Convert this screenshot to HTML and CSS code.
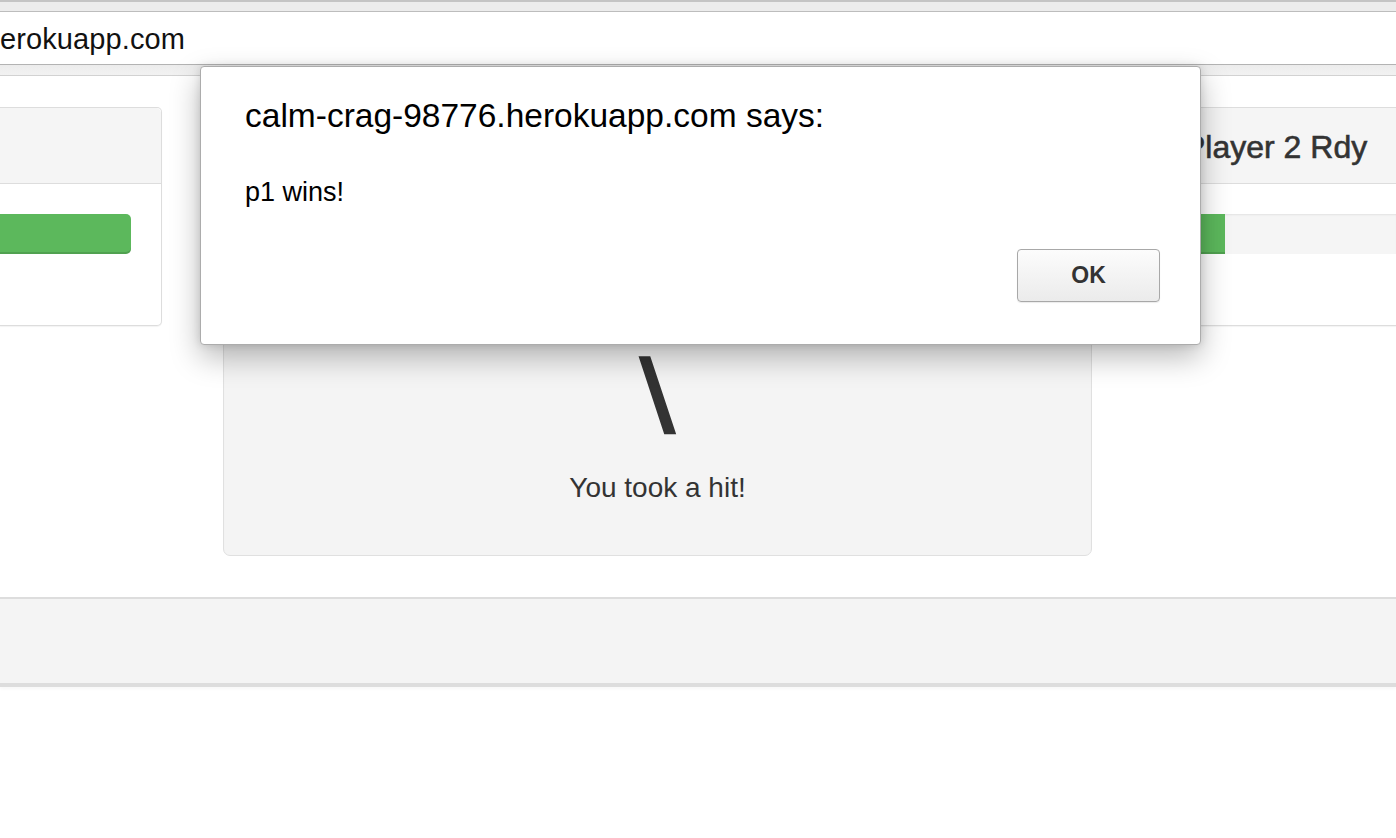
FILE: index.html
```html
<!DOCTYPE html>
<html>
<head>
<meta charset="utf-8">
<title>calm-crag-98776</title>
<link rel="stylesheet" href="styles.css">
</head>
<body>
<header class="chrome">
  <div class="tabstrip"></div>
  <div class="address">erokuapp.com</div>
  <div class="toolbar"></div>
</header>

<main class="arena">
  <section class="panel panel-left">
    <div class="panel-heading"></div>
    <div class="panel-body">
      <div class="hp-bar full"></div>
    </div>
  </section>

  <section class="well">
    <div class="attack">\</div>
    <p class="status">You took a hit!</p>
  </section>

  <section class="panel panel-right">
    <div class="panel-heading"><h3 class="player">Player 2 Rdy</h3></div>
    <div class="panel-body">
      <div class="progress"><div class="progress-fill" style="width: 39px"></div></div>
    </div>
  </section>
</main>

<footer class="footer-band"></footer>

<div class="dialog" role="alertdialog">
  <h2 class="dialog-title">calm-crag-98776.herokuapp.com says:</h2>
  <p class="dialog-msg">p1 wins!</p>
  <div class="dialog-actions">
    <button class="ok-btn">OK</button>
  </div>
</div>
</body>
</html>
```

FILE: styles.css
```css
* { box-sizing: border-box; }

html, body {
  margin: 0;
  padding: 0;
  background: #ffffff;
  font-family: "Liberation Sans", Arial, Helvetica, sans-serif;
  color: #333333;
  overflow: hidden;
}

body {
  width: 1396px;
  height: 838px;
  position: relative;
}

/* ---------- browser chrome ---------- */
.chrome { display: flex; flex-direction: column; }

.tabstrip {
  height: 12px;
  background: #ececec;
  border-top: 2px solid #c4c4c4;
  border-bottom: 1px solid #bdbdbd;
}

.address {
  height: 52px;
  background: #ffffff;
  font-size: 29px;
  line-height: 52px;
  padding-top: 1px;
  color: #111111;
  white-space: nowrap;
  letter-spacing: 0.1px;
}

.toolbar {
  height: 12px;
  background: linear-gradient(#ececec, #f2f2f2);
  border-top: 1px solid #b3b3b3;
  border-bottom: 1px solid #d2d2d2;
}

/* ---------- arena ---------- */
.arena {
  display: flex;
  align-items: flex-start;
  padding-top: 31px;
}

.panel {
  background: #ffffff;
  border: 1px solid #dddddd;
  box-shadow: 0 1px 1px rgba(0,0,0,0.05);
}

.panel-heading {
  height: 76px;
  background: #f5f5f5;
  border-bottom: 1px solid #dddddd;
  display: flex;
  align-items: center;
}

.panel-body {
  height: 141px;
  padding-top: 30px;
}

.panel-left {
  width: 162px;
  border-left: none;
  border-radius: 0 5px 5px 0;
}
.panel-left .panel-heading { border-radius: 0 5px 0 0; }
.panel-left .panel-body { padding-right: 30px; }

.hp-bar {
  height: 40px;
  background: #5cb85c;
  border-radius: 0 5px 5px 0;
  box-shadow: inset 0 -2px 0 rgba(0,0,0,0.12);
}

.panel-right {
  flex: 1;
  margin-left: 78px;
  border-right: none;
  border-radius: 5px 0 0 5px;
}

.player {
  margin: 0 0 0 13px;
  font-size: 32px;
  font-weight: 400;
  -webkit-text-stroke: 0.6px #333333;
  color: #333333;
  white-space: nowrap;
  padding-top: 4px;
}

.panel-right .panel-body { padding-left: 15px; }

.progress {
  height: 40px;
  background: #f5f5f5;
  box-shadow: inset 0 2px 2px -1px rgba(0,0,0,0.08);
  overflow: hidden;
}

.progress-fill {
  height: 100%;
  background: #5cb85c;
  box-shadow: inset 0 -2px 0 rgba(0,0,0,0.12);
}

.well {
  width: 869px;
  height: 449px;
  margin-left: 61px;
  background: #f4f4f4;
  border: 1px solid #e0e0e0;
  border-radius: 7px;
  box-shadow: inset 0 1px 1px rgba(0,0,0,0.04);
  display: flex;
  flex-direction: column;
  align-items: center;
  justify-content: flex-end;
  padding-bottom: 50px;
}

.attack {
  font-size: 104px;
  line-height: 104px;
  font-weight: 400;
  color: #333333;
  -webkit-text-stroke: 1.5px #333333;
  transform: scaleX(1.22);
  margin-bottom: 5px;
}

.status {
  margin: 18px 0 0;
  font-size: 28px;
  line-height: 34px;
  color: #333333;
}

/* ---------- footer band ---------- */
.footer-band {
  margin-top: 41px;
  height: 90px;
  background: #f4f4f4;
  border-top: 2px solid #dddddd;
  border-bottom: 4px solid #dddddd;
  box-shadow: 0 2px 3px rgba(0,0,0,0.03);
}

/* ---------- alert dialog (overlay) ---------- */
.dialog {
  position: absolute;
  left: 200px;
  top: 66px;
  width: 1001px;
  height: 279px;
  background: #ffffff;
  border: 1px solid #acacac;
  border-radius: 4px;
  box-shadow: 0 12px 30px rgba(0,0,0,0.28), 0 0 8px rgba(0,0,0,0.12);
  padding: 29px 40px 42px 44px;
  display: flex;
  flex-direction: column;
}

.dialog-title {
  margin: 0;
  font-size: 33.5px;
  line-height: 40px;
  font-weight: 400;
  color: #000000;
  white-space: nowrap;
}

.dialog-msg {
  margin: 40px 0 0;
  font-size: 27px;
  line-height: 32px;
  color: #000000;
}

.dialog-actions {
  margin-top: auto;
  display: flex;
  justify-content: flex-end;
}

.ok-btn {
  width: 143px;
  height: 53px;
  border: 1px solid #a8a8a8;
  border-radius: 4px;
  background: linear-gradient(#fcfcfc, #ebebeb);
  box-shadow: 0 1px 1px rgba(0,0,0,0.08);
  font-family: "Liberation Sans", Arial, sans-serif;
  font-size: 23px;
  font-weight: 700;
  color: #333333;
  padding: 0;
}
```
